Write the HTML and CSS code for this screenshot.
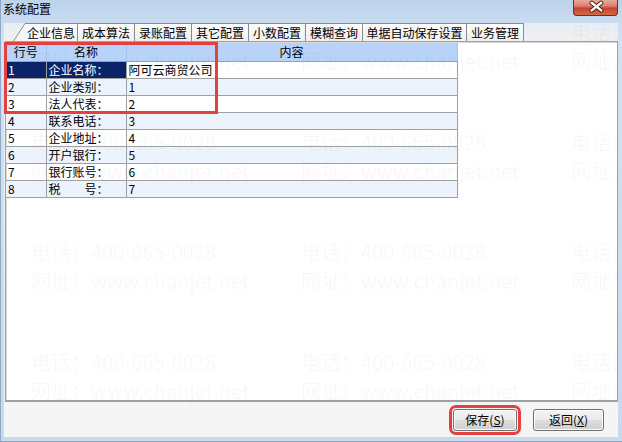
FILE: index.html
```html
<!DOCTYPE html>
<html lang="zh-CN">
<head>
    <meta charset="UTF-8">
    <title>系统配置</title>
    <link rel="stylesheet" href="styles.css">
</head>
<body>
<div class="window">
    <div class="titlebar">
        <span class="title">系统配置</span>
        <button class="close" aria-label="关闭">
            <svg width="45" height="16" viewBox="0 0 45 16">
                <path d="M18.5 2.5 L28.5 10.5 M28.5 2.5 L18.5 10.5" stroke="#4a1a14" stroke-width="4.4" stroke-linecap="round"/>
                <path d="M18.5 2.5 L28.5 10.5 M28.5 2.5 L18.5 10.5" stroke="#fff" stroke-width="2.6" stroke-linecap="round"/>
            </svg>
        </button>
    </div>

    <div class="client">
        <div class="tabs">
            <span class="tab tab-first">
                <svg class="slant" width="12" height="18" viewBox="0 0 12 18">
                    <path d="M0 18 L12 0.5 V18 Z" fill="#f6f6f6"/>
                    <path d="M0.5 18 L12 0.5" stroke="#8c8c8c" stroke-width="1" fill="none"/>
                </svg>
                <span class="tab-label">企业信息</span>
            </span>
            <span class="tab">成本算法</span>
            <span class="tab">录账配置</span>
            <span class="tab">其它配置</span>
            <span class="tab">小数配置</span>
            <span class="tab">模糊查询</span>
            <span class="tab tab-long">单据自动保存设置</span>
            <span class="tab">业务管理</span>
        </div>

        <div class="panel">
            <table class="grid">
                <colgroup>
                    <col class="col-no">
                    <col class="col-name">
                    <col class="col-value">
                </colgroup>
                <tr>
                    <th>行号</th>
                    <th>名称</th>
                    <th>内容</th>
                </tr>
                <tr class="selected">
                    <td class="hl">1</td>
                    <td class="hl">企业名称：</td>
                    <td>阿可云商贸公司</td>
                </tr>
                <tr>
                    <td>2</td>
                    <td>企业类别：</td>
                    <td>1</td>
                </tr>
                <tr>
                    <td>3</td>
                    <td>法人代表：</td>
                    <td>2</td>
                </tr>
                <tr>
                    <td>4</td>
                    <td>联系电话：</td>
                    <td>3</td>
                </tr>
                <tr>
                    <td>5</td>
                    <td>企业地址：</td>
                    <td>4</td>
                </tr>
                <tr>
                    <td>6</td>
                    <td>开户银行：</td>
                    <td>5</td>
                </tr>
                <tr>
                    <td>7</td>
                    <td>银行账号：</td>
                    <td>6</td>
                </tr>
                <tr>
                    <td>8</td>
                    <td>税　　号：</td>
                    <td>7</td>
                </tr>
            </table>
            <div class="mark-box"></div>
        </div>

        <div class="footer">
            <button class="btn btn-save">保存(<u>S</u>)</button>
            <button class="btn btn-back">返回(<u>X</u>)</button>
        </div>
    </div>

    <!-- faint contact watermark tiled across the dialog -->
    <div class="watermark">
        <div><p>电话：400-665-0028</p><p>网址：www.chanjet.net</p></div>
        <div><p>电话：400-665-0028</p><p>网址：www.chanjet.net</p></div>
        <div><p>电话：400-665-0028</p><p>网址：www.chanjet.net</p></div>
        <div><p>电话：400-665-0028</p><p>网址：www.chanjet.net</p></div>
        <div><p>电话：400-665-0028</p><p>网址：www.chanjet.net</p></div>
        <div><p>电话：400-665-0028</p><p>网址：www.chanjet.net</p></div>
        <div><p>电话：400-665-0028</p><p>网址：www.chanjet.net</p></div>
        <div><p>电话：400-665-0028</p><p>网址：www.chanjet.net</p></div>
        <div><p>电话：400-665-0028</p><p>网址：www.chanjet.net</p></div>
        <div><p>电话：400-665-0028</p><p>网址：www.chanjet.net</p></div>
        <div><p>电话：400-665-0028</p><p>网址：www.chanjet.net</p></div>
        <div><p>电话：400-665-0028</p><p>网址：www.chanjet.net</p></div>
    </div>
</div>
</body>
</html>
```

FILE: styles.css
```css
* {
    box-sizing: border-box;
}
body {
    margin: 0;
    font-family: "Noto Sans CJK SC", "Liberation Sans", sans-serif;
    font-size: 12px;
    color: #000;
}
.window {
    position: relative;
    width: 622px;
    height: 442px;
    overflow: hidden;
    display: flex;
    flex-direction: column;
    padding: 0 4px 4px 3px;
    background: linear-gradient(#bcd3ec, #d3e2f3 40px, #c7daef);
    border-left: 1px solid #8ea9c8;
    border-bottom: 1px solid #8ea9c8;
}

/* title bar */
.titlebar {
    display: flex;
    align-items: flex-start;
    height: 24px;
    margin-left: -1px;
}
.title {
    padding-top: 1px;
    line-height: 16px;
    font-size: 12px;
    color: #000;
}
.close {
    margin-left: auto;
    width: 45px;
    height: 16px;
    padding: 0;
    border: 1px solid #7a2a1f;
    border-top: none;
    border-radius: 0 0 4px 4px;
    background: linear-gradient(#e9aa9d, #d98070 40%, #c8452f 55%, #d06a44);
    display: flex;
}

/* client area */
.client {
    flex: 1;
    display: flex;
    flex-direction: column;
    background: linear-gradient(#e6eef7, #f0f0f0 18px);
}
.tabs {
    display: flex;
    height: 18px;
    padding-left: 9px;
}
.tab {
    height: 18px;
    padding: 0 4px;
    line-height: 17px;
    border: 1px solid #8c8c8c;
    border-left: none;
    border-bottom: none;
    background: linear-gradient(#fdfdfd, #f0f0f0);
    white-space: nowrap;
}
.tab-long {
    padding: 0 3.5px;
}
.tab-first {
    display: flex;
    padding: 0;
    border: none;
    background: none;
}
.tab-first .tab-label {
    padding: 0 2px;
    border-top: 1px solid #8c8c8c;
    border-right: 1px solid #8c8c8c;
    background: linear-gradient(#fdfdfd, #f6f6f6);
    line-height: 17px;
}

/* tab page */
.panel {
    position: relative;
    height: 361px;
    margin-left: 1px;
    padding-top: 1px;
    background: #fff;
    border: 1px solid #a0a0a0;
    border-bottom: 2px solid #a0a0a0;
    box-shadow: inset 1px 1px 0 #d8d8d8;
}
.grid {
    border-collapse: collapse;
    table-layout: fixed;
    width: 451px;
}
.col-no {
    width: 40px;
}
.col-name {
    width: 80px;
}
.col-value {
    width: 331px;
}
.grid th,
.grid td {
    height: 17px;
    padding: 0 2px;
    line-height: 16px;
    font-weight: normal;
    text-align: left;
    white-space: nowrap;
    border: 1px solid #a0a0a0;
    border-top: none;
}
.grid th {
    height: 18px;
    text-align: center;
    background: #b7d3f9;
    border-color: #a9c4e8;
    border-bottom-color: #a0a0a0;
}
.grid tr:nth-child(odd) td {
    background: #ecf3fd;
}
.grid tr.selected td {
    background: #fff;
}
.grid tr.selected td.hl {
    background: #0a246a;
    color: #fff;
}
.grid td:first-child,
.grid th:first-child {
    border-left: none;
}
.mark-box {
    position: absolute;
    left: -2px;
    top: 0;
    width: 214px;
    height: 72px;
    border: 3px solid #e4403f;
}

/* buttons */
.footer {
    display: flex;
    justify-content: flex-end;
    align-items: flex-start;
    gap: 16px;
    height: 35px;
    padding: 7px 14px 0 0;
    background: #f5f5f5;
}
.btn {
    height: 22px;
    padding: 0;
    font-family: inherit;
    font-size: 12px;
    line-height: 20px;
    color: #000;
    border: 1px solid #707070;
    border-radius: 3px;
    background: linear-gradient(#f3f3f3, #ebebeb 48%, #dddddd 52%, #cfcfcf);
    box-shadow: inset 0 0 0 1px #fcfcfc;
}
.btn-save {
    width: 64px;
    outline: 3px solid #e4403f;
    outline-offset: 1px;
}
.btn-back {
    width: 71px;
}

/* watermark */
.watermark {
    position: absolute;
    left: 30px;
    top: 17px;
    display: grid;
    grid-template-columns: repeat(3, 270px);
    grid-auto-rows: 110px;
    pointer-events: none;
    font-size: 20px;
    line-height: 29px;
    color: rgba(0, 0, 0, 0.04);
    white-space: nowrap;
}
.watermark p {
    margin: 0;
}
```
